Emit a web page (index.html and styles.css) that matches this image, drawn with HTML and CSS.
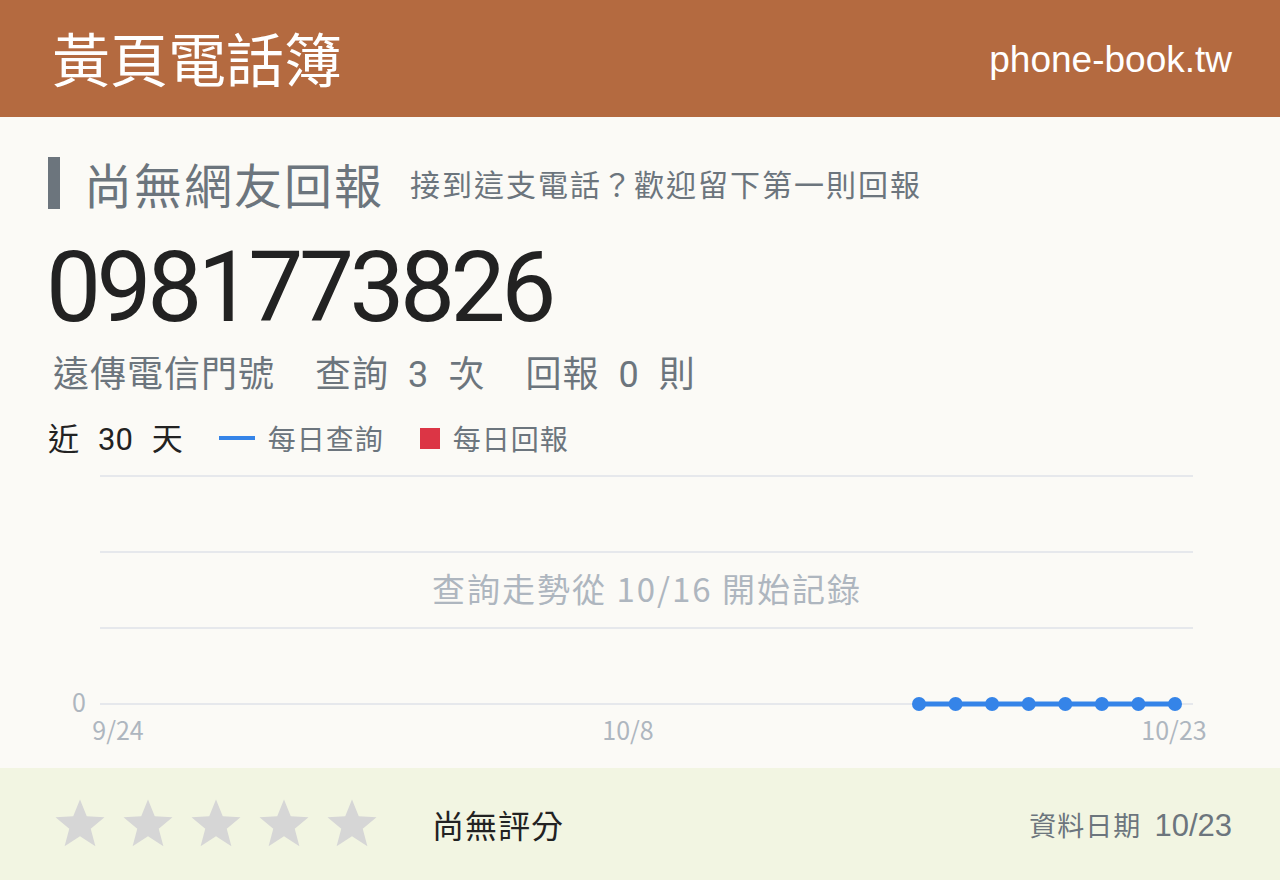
FILE: index.html
```html
<!DOCTYPE html>
<html lang="zh-Hant">
<head>
  <meta charset="UTF-8">
  <meta name="viewport" content="width=device-width, initial-scale=1.0">
  <title>0981773826 - 黃頁電話簿</title>
  <link rel="stylesheet" href="styles.css">
</head>
<body>
  <header class="topbar">
    <div class="brand">黃頁電話簿</div>
    <div class="domain">phone-book.tw</div>
  </header>

  <main class="record">
    <section class="summary">
      <h1 class="status">
        <span class="status-title">尚無網友回報</span>
        <span class="status-hint">接到這支電話？歡迎留下第一則回報</span>
      </h1>
      <div class="number">0981773826</div>
      <div class="stats">
        <span>遠傳電信門號</span>
        <span>查詢 <b>3</b> 次</span>
        <span>回報 <b>0</b> 則</span>
      </div>
      <div class="legend">
        <span class="range">近 <b>30</b> 天</span>
        <span class="key"><i class="swatch swatch-line"></i>每日查詢</span>
        <span class="key"><i class="swatch swatch-box"></i>每日回報</span>
      </div>
    </section>

    <svg class="trend" viewBox="0 0 1280 308" width="1280" height="308">
      <g class="grid">
        <line x1="100" y1="16" x2="1193" y2="16"/>
        <line x1="100" y1="92" x2="1193" y2="92"/>
        <line x1="100" y1="168" x2="1193" y2="168"/>
        <line x1="100" y1="244" x2="1193" y2="244"/>
      </g>
      <text class="axis" x="86" y="252" text-anchor="end">0</text>
      <text class="axis" x="118" y="280" text-anchor="middle">9/24</text>
      <text class="axis" x="628" y="280" text-anchor="middle">10/8</text>
      <text class="axis" x="1174" y="280" text-anchor="middle">10/23</text>
      <text class="note" x="647" y="142" text-anchor="middle">查詢走勢從 10/16 開始記錄</text>
      <polyline class="series" points="919,244 1175,244"/>
      <g class="dots">
        <circle cx="919" cy="244" r="7"/>
        <circle cx="955.6" cy="244" r="7"/>
        <circle cx="992.1" cy="244" r="7"/>
        <circle cx="1028.7" cy="244" r="7"/>
        <circle cx="1065.3" cy="244" r="7"/>
        <circle cx="1101.9" cy="244" r="7"/>
        <circle cx="1138.4" cy="244" r="7"/>
        <circle cx="1175" cy="244" r="7"/>
      </g>
    </svg>
  </main>

  <footer class="rating">
    <div class="stars">
      <svg viewBox="0 0 24 24"><polygon points="12,1.5 14.9,8.7 22.5,9.1 16.6,14 18.6,21.5 12,17.3 5.4,21.5 7.4,14 1.5,9.1 9.1,8.7"/></svg>
      <svg viewBox="0 0 24 24"><polygon points="12,1.5 14.9,8.7 22.5,9.1 16.6,14 18.6,21.5 12,17.3 5.4,21.5 7.4,14 1.5,9.1 9.1,8.7"/></svg>
      <svg viewBox="0 0 24 24"><polygon points="12,1.5 14.9,8.7 22.5,9.1 16.6,14 18.6,21.5 12,17.3 5.4,21.5 7.4,14 1.5,9.1 9.1,8.7"/></svg>
      <svg viewBox="0 0 24 24"><polygon points="12,1.5 14.9,8.7 22.5,9.1 16.6,14 18.6,21.5 12,17.3 5.4,21.5 7.4,14 1.5,9.1 9.1,8.7"/></svg>
      <svg viewBox="0 0 24 24"><polygon points="12,1.5 14.9,8.7 22.5,9.1 16.6,14 18.6,21.5 12,17.3 5.4,21.5 7.4,14 1.5,9.1 9.1,8.7"/></svg>
    </div>
    <div class="score">尚無評分</div>
    <div class="updated">資料日期 <b>10/23</b></div>
  </footer>
</body>
</html>
```

FILE: styles.css
```css
:root {
  --brand: #b46a40;
  --paper: #fbfaf6;
  --footer: #f2f5e2;
  --ink: #222;
  --muted: #6c757d;
  --faint: #aeb6bf;
  --grid: #e6e8ec;
  --blue: #3584e8;
  --red: #dc3545;
}

* {
  margin: 0;
  padding: 0;
  box-sizing: border-box;
}

body {
  width: 1280px;
  height: 880px;
  overflow: hidden;
  background: var(--paper);
  font-family: "Noto Sans CJK TC", "Noto Sans", sans-serif;
  color: var(--ink);
}

b {
  font-weight: normal;
}

.topbar {
  height: 117px;
  background: var(--brand);
  color: #fff;
  display: flex;
  align-items: center;
  justify-content: space-between;
  padding: 0 48px 0 52px;
}

.brand {
  font-size: 58px;
  line-height: 1;
  margin-top: -4px;
}

.domain {
  font-family: "Liberation Sans", Arial, sans-serif;
  font-size: 37px;
  line-height: 1;
  margin-top: 2px;
}

.record {
  height: 651px;
}

.summary {
  padding: 40px 48px 0;
}

.status {
  display: flex;
  align-items: center;
  font-weight: normal;
  height: 52px;
  border-left: 12px solid var(--muted);
  padding-left: 24px;
}

.status-title {
  font-size: 48px;
  line-height: 1;
  color: var(--muted);
  letter-spacing: 2px;
}

.status-hint {
  font-size: 30px;
  line-height: 1;
  color: var(--muted);
  letter-spacing: 2px;
  margin-left: 26px;
}

.number {
  font-family: Roboto, "Liberation Sans", sans-serif;
  font-size: 98px;
  line-height: 1;
  letter-spacing: -4.5px;
  margin-top: 30px;
  margin-left: -2px;
}

.stats {
  display: flex;
  gap: 40px;
  font-size: 36px;
  line-height: 1;
  color: var(--muted);
  margin-top: 16px;
  padding-left: 5px;
  letter-spacing: 1px;
}

.stats b {
  font-family: Roboto, sans-serif;
  margin: 0 10px;
}

.legend {
  display: flex;
  align-items: center;
  margin-top: 28px;
  font-size: 28px;
  line-height: 1;
  color: var(--muted);
}

.range {
  color: var(--ink);
  font-size: 31px;
  margin-right: 36px;
}

.range b {
  font-family: Roboto, sans-serif;
  margin: 0 12px;
}

.key {
  display: flex;
  align-items: center;
  margin-right: 36px;
  letter-spacing: 1px;
}

.swatch {
  display: block;
  margin-right: 13px;
}

.swatch-line {
  width: 36px;
  height: 4px;
  background: var(--blue);
}

.swatch-box {
  width: 20px;
  height: 21px;
  background: var(--red);
}

.trend {
  display: block;
  margin-top: 5px;
}

.grid line {
  stroke: var(--grid);
  stroke-width: 2;
}

.axis {
  font-family: "Noto Sans CJK TC", sans-serif;
  font-size: 25px;
  fill: var(--faint);
}

.note {
  font-family: "Noto Sans CJK TC", sans-serif;
  font-size: 33px;
  fill: var(--faint);
  letter-spacing: 2px;
}

.series {
  fill: none;
  stroke: var(--blue);
  stroke-width: 5;
}

.dots circle {
  fill: var(--blue);
}

.rating {
  height: 112px;
  background: var(--footer);
  display: flex;
  align-items: center;
  padding: 0 48px 0 52px;
}

.stars {
  display: flex;
  gap: 12px;
}

.stars svg {
  width: 56px;
  height: 56px;
  fill: #d6d6d6;
}

.score {
  font-size: 32px;
  color: var(--ink);
  margin-left: 52px;
  letter-spacing: 1px;
}

.updated {
  margin-left: auto;
  font-size: 27px;
  color: var(--muted);
  letter-spacing: 1px;
}

.updated b {
  font-family: "Liberation Sans", Arial, sans-serif;
  font-size: 31px;
  margin-left: 6px;
  letter-spacing: 0;
}
```
